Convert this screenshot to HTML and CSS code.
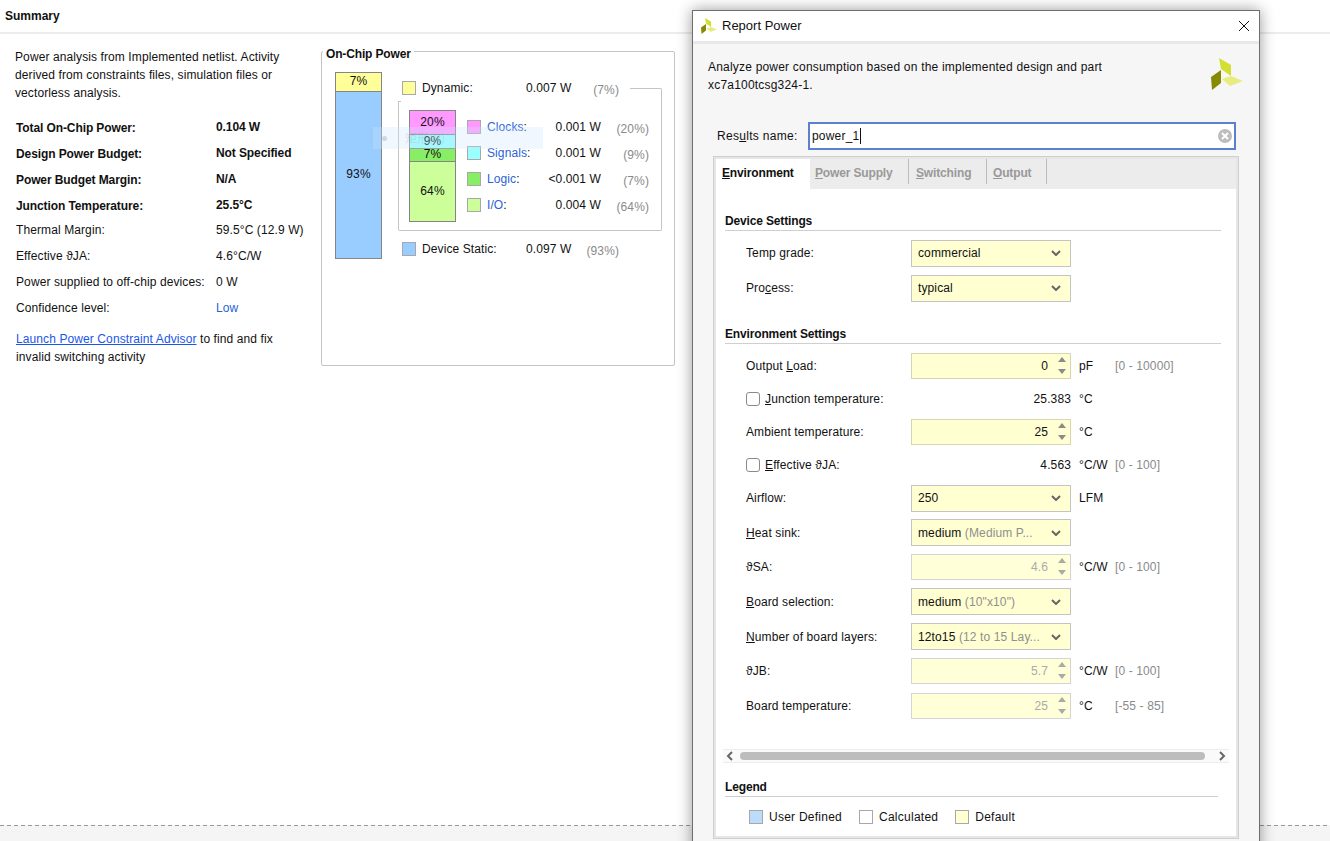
FILE: index.html
```html
<!DOCTYPE html>
<html>

<head>
    <meta charset='UTF-8'>
    <title>Report Power</title>
    <link rel="stylesheet" href="styles.css">
</head>

<body>
    <div class="page">
        <div class="page-title">Summary</div>
        <div class="page-body">
            <div class="summary">
                <p class="intro">Power analysis from Implemented netlist. Activity derived from constraints files, simulation files or vectorless analysis.</p>
                <div class="sum-grid">
                    <b class="bk">Total On-Chip Power:</b><b>0.104 W</b>
                    <b class="bk">Design Power Budget:</b><b>Not Specified</b>
                    <b class="bk">Power Budget Margin:</b><b>N/A</b>
                    <b class="bk">Junction Temperature:</b><b>25.5°C</b>
                    <span>Thermal Margin:</span><span>59.5°C (12.9 W)</span>
                    <span>Effective ϑJA:</span><span>4.6°C/W</span>
                    <span>Power supplied to off-chip devices:</span><span>0 W</span>
                    <span>Confidence level:</span><span class="blue">Low</span>
                </div>
                <p class="advisor"><a href="#">Launch Power Constraint Advisor</a> to find and fix invalid switching activity</p>
            </div>

            <div class="chip">
                <div class="chip-title">On-Chip Power</div>
                <div class="chip-inner">
                    <div class="bar bar-main">
                        <div class="seg seg-dyn">7%</div>
                        <div class="seg seg-static">93%</div>
                    </div>
                    <div class="chip-right">
                        <div class="power-row power-dyn">
                            <i class="swatch c-dyn"></i><span class="p-name">Dynamic:</span><span class="p-val">0.007 W</span><span class="p-pct">(7%)</span>
                        </div>
                        <div class="dyn-box">
                            <div class="bar bar-sub">
                                <div class="seg seg-clk">20%</div>
                                <div class="seg seg-sig">9%</div>
                                <div class="seg seg-log">7%</div>
                                <div class="seg seg-io">64%</div>
                            </div>
                            <div class="sub-list">
                                <div class="sub-row"><i class="swatch c-clk"></i><span class="s-name"><span class="blue">Clocks</span>:</span><span class="s-val">0.001 W</span><span class="s-pct">(20%)</span></div>
                                <div class="sub-row"><i class="swatch c-sig"></i><span class="s-name"><span class="blue">Signals</span>:</span><span class="s-val">0.001 W</span><span class="s-pct">(9%)</span></div>
                                <div class="sub-row"><i class="swatch c-log"></i><span class="s-name"><span class="blue">Logic</span>:</span><span class="s-val">&lt;0.001 W</span><span class="s-pct">(7%)</span></div>
                                <div class="sub-row"><i class="swatch c-io"></i><span class="s-name"><span class="blue">I/O</span>:</span><span class="s-val">0.004 W</span><span class="s-pct">(64%)</span></div>
                            </div>
                        </div>
                        <div class="power-row power-static">
                            <i class="swatch c-static"></i><span class="p-name">Device Static:</span><span class="p-val">0.097 W</span><span class="p-pct">(93%)</span>
                        </div>
                    </div>
                </div>
            </div>
        </div>
        <div class="ghost"><i class="ghost-dot"></i><span>矩形(R)</span></div>
    </div>
    <div class="page-foot"></div>

    <div class="dialog">
        <div class="titlebar">
            <svg class="logo-small" viewBox="0 0 32 32"><polygon points="8,0 20,7 20,18 10,11" fill="#d4df34"/><polygon points="0,19 10,12 10,25 1,32" fill="#858a00"/><polygon points="11,21 20,18 32,23 19,28" fill="#e6ec80"/></svg>
            <span class="title-text">Report Power</span>
            <svg class="close" viewBox="0 0 12 12"><path d="M1 1L11 11M11 1L1 11" stroke="#111" stroke-width="1" fill="none"/></svg>
        </div>
        <div class="dialog-body">
            <div class="desc">
                <p>Analyze power consumption based on the implemented design and part<br>xc7a100tcsg324-1.</p>
                <svg class="logo-big" viewBox="0 0 32 32"><polygon points="8,0 20,7 20,18 10,11" fill="#d4df34"/><polygon points="0,19 10,12 10,25 1,32" fill="#858a00"/><polygon points="11,21 20,18 32,23 19,28" fill="#e6ec80"/></svg>
            </div>
            <div class="results">
                <label>Res<u>u</u>lts name:</label>
                <div class="results-input"><span>power_1</span><i class="caret"></i>
                    <svg class="clear" viewBox="0 0 14 14"><circle cx="7" cy="7" r="7" fill="#bdbdbd"/><path d="M4 4L10 10M10 4L4 10" stroke="#fff" stroke-width="2"/></svg>
                </div>
            </div>
            <div class="tabs-wrap">
                <div class="tabs">
                    <div class="tab active"><u>E</u>nvironment</div>
                    <div class="tab tab-ps"><u>P</u>ower Supply</div>
                    <div class="tab tab-sw"><u>S</u>witching</div>
                    <div class="tab tab-out"><u>O</u>utput</div>
                </div>
                <div class="tab-body">
                    <h4 class="sec sec-first">Device Settings</h4>
                    <div class="rows-a">
                        <div class="row row-a">
                            <label>Temp <u>g</u>rade:</label>
                            <div class="ctl sel"><span>commercial</span><svg class="chev" viewBox="0 0 10 6"><path d="M1 1L5 5L9 1" stroke="#666" stroke-width="2" fill="none"/></svg></div>
                        </div>
                        <div class="row row-a">
                            <label>Pro<u>c</u>ess:</label>
                            <div class="ctl sel"><span>typical</span><svg class="chev" viewBox="0 0 10 6"><path d="M1 1L5 5L9 1" stroke="#666" stroke-width="2" fill="none"/></svg></div>
                        </div>
                    </div>
                    <h4 class="sec sec-env">Environment Settings</h4>
                    <div class="rows-b">
                        <div class="row row-b">
                            <label>Output <u>L</u>oad:</label>
                            <div class="ctl spin"><span>0</span><i class="arrows"><i class="up"></i><i class="down"></i></i></div>
                            <span class="unit">pF</span><span class="range">[0 - 10000]</span>
                        </div>
                        <div class="row row-b">
                            <label class="check"><i class="box"></i><span><u>J</u>unction temperature:</span></label>
                            <div class="ctl plain">25.383</div>
                            <span class="unit">°C</span>
                        </div>
                        <div class="row row-b">
                            <label>Ambient temperature:</label>
                            <div class="ctl spin"><span>25</span><i class="arrows"><i class="up"></i><i class="down"></i></i></div>
                            <span class="unit">°C</span>
                        </div>
                        <div class="row row-b">
                            <label class="check"><i class="box"></i><span><u>E</u>ffective ϑJA:</span></label>
                            <div class="ctl plain">4.563</div>
                            <span class="unit">°C/W</span><span class="range">[0 - 100]</span>
                        </div>
                        <div class="row row-b">
                            <label>Airflow:</label>
                            <div class="ctl sel"><span>250</span><svg class="chev" viewBox="0 0 10 6"><path d="M1 1L5 5L9 1" stroke="#666" stroke-width="2" fill="none"/></svg></div>
                            <span class="unit">LFM</span>
                        </div>
                    </div>
                    <div class="row row-c">
                        <label><u>H</u>eat sink:</label>
                        <div class="ctl sel"><span>medium <em>(Medium P...</em></span><svg class="chev" viewBox="0 0 10 6"><path d="M1 1L5 5L9 1" stroke="#666" stroke-width="2" fill="none"/></svg></div>
                    </div>
                    <div class="row row-c">
                        <label>ϑSA:</label>
                        <div class="ctl spin off"><span>4.6</span><i class="arrows"><i class="up"></i><i class="down"></i></i></div>
                        <span class="unit">°C/W</span><span class="range">[0 - 100]</span>
                    </div>
                    <div class="row row-c">
                        <label><u>B</u>oard selection:</label>
                        <div class="ctl sel"><span>medium <em>(10"x10")</em></span><svg class="chev" viewBox="0 0 10 6"><path d="M1 1L5 5L9 1" stroke="#666" stroke-width="2" fill="none"/></svg></div>
                    </div>
                    <div class="row row-c">
                        <label><u>N</u>umber of board layers:</label>
                        <div class="ctl sel"><span>12to15 <em>(12 to 15 Lay...</em></span><svg class="chev" viewBox="0 0 10 6"><path d="M1 1L5 5L9 1" stroke="#666" stroke-width="2" fill="none"/></svg></div>
                    </div>
                    <div class="row row-c">
                        <label>ϑJB:</label>
                        <div class="ctl spin off"><span>5.7</span><i class="arrows"><i class="up"></i><i class="down"></i></i></div>
                        <span class="unit">°C/W</span><span class="range">[0 - 100]</span>
                    </div>
                    <div class="row row-c">
                        <label>Board temperature:</label>
                        <div class="ctl spin off"><span>25</span><i class="arrows"><i class="up"></i><i class="down"></i></i></div>
                        <span class="unit">°C</span><span class="range">[-55 - 85]</span>
                    </div>
                    <div class="hscroll">
                        <svg class="sc-arrow" viewBox="0 0 8 12"><path d="M6 2L2 6L6 10" stroke="#666" stroke-width="2" fill="none"/></svg>
                        <div class="sc-track"><div class="sc-thumb"></div></div>
                        <svg class="sc-arrow" viewBox="0 0 8 12"><path d="M2 2L6 6L2 10" stroke="#666" stroke-width="2" fill="none"/></svg>
                    </div>
                    <h4 class="sec sec-legend">Legend</h4>
                    <div class="legend">
                        <i class="swatch lg-user"></i><span>User Defined</span>
                        <i class="swatch lg-calc"></i><span>Calculated</span>
                        <i class="swatch lg-def"></i><span>Default</span>
                    </div>
                </div>
            </div>
        </div>
    </div>
</body>

</html>
```

FILE: styles.css
```css
html, body {
    margin: 0;
    height: 100%;
    overflow: hidden;
    background-color: #fff;
    color: #111;
    font: 12px/18px "Liberation Sans", Arial, sans-serif;
}

p {
    margin: 0;
}

u {
    text-underline-offset: 1px;
}

/* 页面左侧 */
.page {
    height: 825px;
    position: relative;
    letter-spacing: 0.1px;
}

.page b {
    letter-spacing: -0.1px;
}

.page-title {
    height: 32px;
    padding-left: 5px;
    line-height: 32px;
    font-weight: bold;
    letter-spacing: 0;
    border-bottom: 2px solid #ececec;
}

.page-body {
    display: flex;
    align-items: flex-start;
}

.summary {
    width: 306px;
    padding: 14px 0 0 15px;
    box-sizing: border-box;
}

.intro {
    width: 285px;
}

.sum-grid {
    display: grid;
    grid-template-columns: 200px 1fr;
    grid-auto-rows: 26px;
    align-items: center;
    margin: 12px 0 0 1px;
}

/* 普通行比粗体行高一点 */
.sum-grid span {
    margin-bottom: 2px;
}

.sum-grid .bk {
    margin-top: 2px;
}

.blue {
    color: #2a62d8;
}

.advisor {
    width: 285px;
    margin: 8px 0 0 1px;
}

.advisor a {
    color: #1a56e8;
}

/* 芯片功耗 */
.chip {
    width: 354px;
    height: 315px;
    margin: 17px 0 0 15px;
    box-sizing: border-box;
    border: 1px solid #c4c4c4;
    border-radius: 2px;
    position: relative;
}

.chip-title {
    position: absolute;
    left: 1px;
    top: -5px;
    padding: 0 3px;
    background-color: #fff;
    font-weight: bold;
    letter-spacing: -0.15px;
    line-height: 14px;
}

.chip-inner {
    display: flex;
    padding: 20px 0 0 13px;
}

.bar {
    display: flex;
    flex-direction: column;
    box-sizing: border-box;
    border: 1px solid #858585;
    width: 47px;
    text-align: center;
}

.bar-main {
    height: 187px;
}

.seg {
    border-top: 1px solid #858585;
    box-sizing: border-box;
}

.seg:first-child {
    border-top: none;
}

.seg-dyn { height: 18px; line-height: 17px; background-color: #ffff99; }
.seg-static { flex: 1; background-color: #99ccff; line-height: 165px; }
.seg-clk { height: 23px; line-height: 22px; background-color: #ff99ff; }
.seg-sig { height: 14px; line-height: 12px; background-color: #99ffff; }
.seg-log { height: 13px; line-height: 10px; background-color: #88ee66; }
.seg-io { flex: 1; background-color: #ccff99; line-height: 59px; }

.swatch {
    display: block;
    box-sizing: border-box;
    width: 14px;
    height: 14px;
    border: 1px solid #a8a8a8;
    flex: none;
}

.c-dyn { background-color: #ffff99; }
.c-static { background-color: #99ccff; }
.c-clk { background-color: #ff99ff; }
.c-sig { background-color: #99ffff; }
.c-log { background-color: #88ee66; }
.c-io { background-color: #ccff99; }

.chip-right {
    margin-left: 16px;
    width: 264px;
}

.power-row {
    display: flex;
    align-items: center;
    height: 14px;
    margin-left: 4px;
}

.power-dyn {
    margin-top: 9px;
}

.p-name {
    margin-left: 6px;
    width: 104px;
}

.p-val {
    width: 60px;
}

.p-pct {
    width: 33px;
    white-space: nowrap;
    direction: rtl;
    unicode-bidi: plaintext;
    text-align: right;
    color: #8a8a8a;
    padding-top: 4px;
}

/* 上边框只在右侧露出一段，左边留给 Dynamic 一行 */
.dyn-box {
    width: 264px;
    height: 130px;
    box-sizing: border-box;
    border: 1px solid #c4c4c4;
    border-top: none;
    border-radius: 0 0 2px 2px;
    margin: 6px 0 11px 0;
    padding: 9px 0 0 10px;
    display: flex;
    position: relative;
}

.dyn-box::before {
    content: "";
    position: absolute;
    right: -1px;
    top: -13px;
    width: 31px;
    height: 13px;
    border-top: 1px solid #c4c4c4;
    border-right: 1px solid #c4c4c4;
    border-radius: 0 2px 0 0;
}

.dyn-box::after {
    content: "";
    position: absolute;
    left: -1px;
    top: 0;
    width: 3px;
    border-top: 1px solid #c4c4c4;
}

.bar-sub {
    height: 112px;
}

.sub-list {
    margin: 10px 0 0 11px;
    display: flex;
    flex-direction: column;
    gap: 12px;
}

.sub-row {
    display: flex;
    align-items: center;
    height: 14px;
    width: 182px;
}

.s-name {
    margin-left: 6px;
    width: 60px;
}

.s-val {
    width: 54px;
    text-align: right;
}

.s-pct {
    width: 48px;
    text-align: right;
    color: #8a8a8a;
    padding-top: 4px;
}

.ghost {
    position: absolute;
    left: 373px;
    top: 127px;
    width: 170px;
    height: 22px;
    background-color: rgba(204, 230, 255, 0.3);
    color: rgba(120, 120, 120, 0.2);
    display: flex;
    align-items: center;
    gap: 18px;
    padding-left: 9px;
    box-sizing: border-box;
    font-family: "Noto Sans CJK SC", sans-serif;
}

.ghost-dot {
    width: 5px;
    height: 5px;
    border-radius: 50%;
    background-color: rgba(120, 120, 120, 0.25);
}

.page-foot {
    height: 16px;
    background-color: #f5f5f5;
    border-top: 1px solid transparent;
    background-image: repeating-linear-gradient(90deg, #999 0, #999 4px, transparent 4px, transparent 7px);
    background-size: 100% 1px;
    background-repeat: no-repeat;
    background-origin: border-box;
    background-clip: border-box;
}

/* 对话框 */
.dialog {
    position: absolute;
    left: 692px;
    top: 10px;
    width: 568px;
    height: 860px;
    box-sizing: border-box;
    border: 1px solid #6e6e6e;
    background-color: #f6f6f6;
    box-shadow: 0 0 14px rgba(0, 0, 0, 0.4);
}

.titlebar {
    height: 30px;
    background-color: #fff;
    border-bottom: 3px solid #e8e8e8;
    display: flex;
    align-items: center;
    padding: 0 9px 0 8px;
    font-size: 13px;
}

.logo-small {
    width: 16px;
    height: 16px;
}

.title-text {
    margin-left: 5px;
    flex: 1;
}

.close {
    width: 12px;
    height: 12px;
}

.dialog-body {
    padding: 0 20px;
}

.desc {
    display: flex;
    justify-content: space-between;
    padding: 13px 0 0 0;
    height: 65px;
}

.desc p {
    margin-left: -5px;
    padding-top: 1px;
    letter-spacing: 0.2px;
}

.logo-big {
    width: 32px;
    height: 32px;
    margin: 1px -4px 0 0;
}

.results {
    display: flex;
    align-items: center;
    height: 28px;
    margin: 0 3px 0 4px;
    letter-spacing: 0.3px;
}

.results label {
    width: 91px;
}

.results-input {
    flex: 1;
    height: 28px;
    box-sizing: border-box;
    border: 2px solid #5b80cc;
    background-color: #fff;
    display: flex;
    align-items: center;
    padding: 0 2px;
    letter-spacing: 0.2px;
}

.caret {
    width: 1px;
    height: 16px;
    background-color: #111;
    margin-left: 1px;
}

.clear {
    width: 14px;
    height: 14px;
    margin-left: auto;
}

.tabs-wrap {
    margin-top: 6px;
    border: 1px solid #cfcfcf;
    padding: 2px;
    background-color: #e6e6e6;
    height: 683px;
    box-sizing: border-box;
}

.tabs {
    height: 30px;
    background-color: #ececec;
    display: flex;
    font-weight: bold;
    letter-spacing: -0.15px;
    color: #999;
}

.tab {
    height: 25px;
    line-height: 29px;
    padding-left: 6px;
    box-sizing: border-box;
    border-right: 1px solid #bbb;
}

.tab-ps { width: 99px; padding-left: 5px; }
.tab-sw { width: 78px; padding-left: 7px; }
.tab-out { width: 60px; padding-left: 6px; }

.tab.active {
    width: 94px;
    height: 30px;
    background-color: #fff;
    color: #111;
    border: none;
}

.tab-body {
    background-color: #fff;
    height: 647px;
    padding: 0 7px 0 9px;
    letter-spacing: 0.12px;
}

.sec {
    margin: 0;
    font-size: 12px;
    line-height: 14px;
    font-weight: bold;
    letter-spacing: -0.15px;
    height: 16px;
    border-bottom: 1px solid #cfcfcf;
    width: 496px;
}

.sec-first { padding-top: 25px; }
.sec-env { margin-top: 21.5px; }
.sec-legend { margin-top: 17px; width: 493px; }

.rows-a {
    margin-top: 4.5px;
}

.rows-b {
    margin: 5.5px 0 1px;
}

.row {
    display: flex;
    align-items: center;
    padding-left: 21px;
}

.row label {
    width: 165px;
    flex: none;
}

.row-a { height: 35px; }
.row-b { height: 33px; }
.row-c { height: 34.6px; }

.check {
    display: flex;
    align-items: center;
}

.box {
    width: 14px;
    height: 14px;
    box-sizing: border-box;
    border: 1px solid #8a8a8a;
    border-radius: 3px;
    background-color: #fff;
    margin-right: 5px;
}

.ctl {
    width: 160px;
    height: 27px;
    box-sizing: border-box;
    flex: none;
    display: flex;
    align-items: center;
}

.sel, .spin {
    background-color: #ffffd2;
    border: 1px solid #c4c4c4;
}

.sel {
    justify-content: space-between;
    padding: 0 9px 0 6px;
}

.sel em {
    font-style: normal;
    color: #8f8f8f;
}

.chev {
    width: 10px;
    height: 6px;
}

.spin {
    height: 26px;
    justify-content: flex-end;
    padding-right: 22px;
    position: relative;
    border-color: #d6d6b0;
}

.spin.off {
    background-color: #ffffd8;
    border-color: #d4d4d4;
}

.off span {
    color: #aaa;
}

.arrows {
    position: absolute;
    right: 4px;
    top: 3px;
    display: flex;
    flex-direction: column;
    gap: 7px;
}

.up, .down {
    display: block;
    width: 0;
    height: 0;
    border-left: 4px solid transparent;
    border-right: 4px solid transparent;
}

.up { border-bottom: 5px solid #8a8a8a; }
.down { border-top: 5px solid #8a8a8a; }

.off .up { border-bottom-color: #aaa; }
.off .down { border-top-color: #aaa; }

.plain {
    justify-content: flex-end;
}

.unit {
    margin-left: 8px;
    width: 36px;
    flex: none;
}

.range {
    color: #8a8a8a;
}

.hscroll {
    display: flex;
    align-items: center;
    margin: 25.7px 0 0 -2px;
    height: 12px;
    width: 500px;
    border: 1px solid #ececec;
    border-width: 1px 0;
    background-color: #fafafa;
    padding: 0 3px;
}

.sc-arrow {
    width: 8px;
    height: 12px;
    flex: none;
}

.sc-track {
    flex: 1;
    padding: 0 13px 0 6px;
}

.sc-thumb {
    height: 8px;
    border-radius: 4px;
    background-color: #bdbdbd;
}

.legend {
    display: flex;
    align-items: center;
    margin: 11px 0 0 24px;
    letter-spacing: 0.25px;
}

.legend span {
    margin: 0 17px 0 6px;
}

.lg-user { background-color: #bbdcfb; }
.lg-calc { background-color: #fff; }
.lg-def { background-color: #ffffd2; }
```
